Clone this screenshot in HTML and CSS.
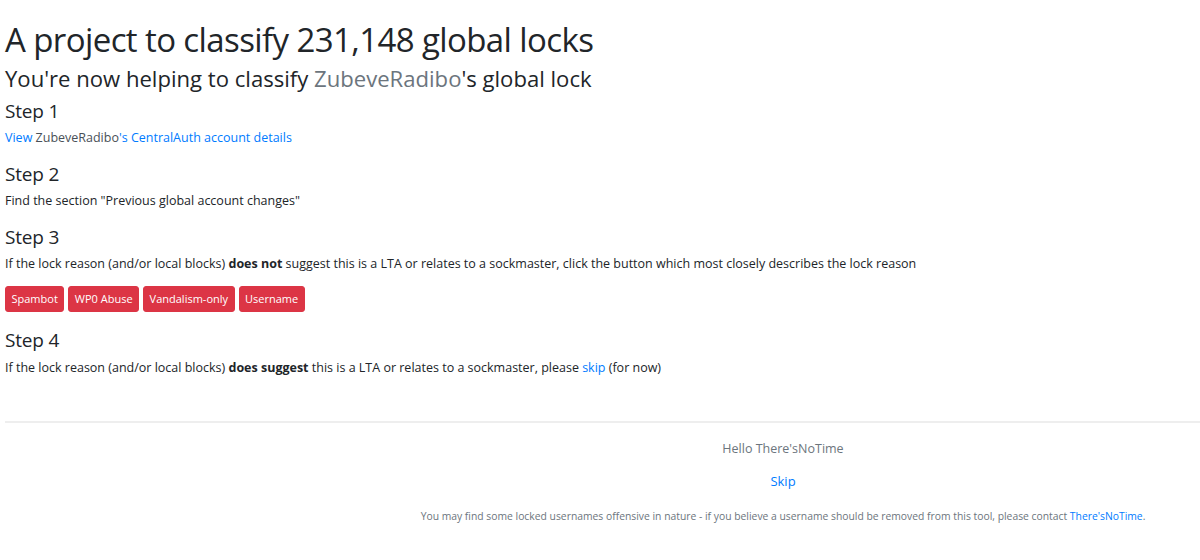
FILE: index.html
```html
<!DOCTYPE html>
<html lang="en">
<head>
<meta charset="utf-8">
<title>Global lock classifier</title>
<link rel="stylesheet" href="styles.css">
</head>
<body>
<main class="page">
  <h1 class="title">A project to classify 231,148 global locks</h1>
  <h3 class="subtitle">You're now helping to classify <span class="muted">ZubeveRadibo</span>'s global lock</h3>

  <section class="step">
    <h4 class="step-title">Step 1</h4>
    <p class="step-text"><a class="link" href="#">View <span class="uname">ZubeveRadibo</span>'s CentralAuth account details</a></p>
  </section>

  <section class="step">
    <h4 class="step-title">Step 2</h4>
    <p class="step-text">Find the section "Previous global account changes"</p>
  </section>

  <section class="step">
    <h4 class="step-title">Step 3</h4>
    <p class="step-text">If the lock reason (and/or local blocks) <b>does not</b> suggest this is a LTA or relates to a sockmaster, click the button which most closely describes the lock reason</p>
    <div class="buttons">
      <button class="btn" type="button">Spambot</button>
      <button class="btn" type="button">WP0 Abuse</button>
      <button class="btn" type="button">Vandalism-only</button>
      <button class="btn" type="button">Username</button>
    </div>
  </section>

  <section class="step">
    <h4 class="step-title">Step 4</h4>
    <p class="step-text">If the lock reason (and/or local blocks) <b>does suggest</b> this is a LTA or relates to a sockmaster, please <a class="link" href="#">skip</a> (for now)</p>
  </section>
</main>

<footer class="footer">
  <div class="footer-inner">
    <p class="hello">Hello There'sNoTime</p>
    <p class="skip"><a class="link" href="#">Skip</a></p>
    <p class="note">You may find some locked usernames offensive in nature - if you believe a username should be removed from this tool, please contact <a class="link" href="#">There'sNoTime</a>.</p>
  </div>
</footer>
</body>
</html>
```

FILE: styles.css
```css
html, body {
  margin: 0;
  padding: 0;
  background: #ffffff;
}

body {
  font-family: "Open Sans", "Noto Sans", sans-serif;
  color: #212529;
  font-size: 12.5px;
  line-height: 1.5;
}

.page {
  padding: 20px 0 0 5px;
}

.title {
  font-size: 33px;
  font-weight: 400;
  line-height: 1.2;
  margin: 0 0 5px;
  letter-spacing: -0.6px;
}

.subtitle {
  font-size: 22.1px;
  font-weight: 400;
  line-height: 1.2;
  margin: 0 0 9px;
}

.muted {
  color: #6c757d;
}

.step-title {
  font-size: 19px;
  font-weight: 400;
  line-height: 1.2;
  margin: 0 0 6.5px;
  letter-spacing: -0.2px;
}

.step-text {
  margin: 0 0 15px;
}

.step-text b {
  font-weight: 700;
}

.link {
  color: #007bff;
  text-decoration: none;
}

.uname {
  color: #495057;
}

.buttons {
  display: flex;
  gap: 4px;
  margin: -3px 0 17px;
}

.btn {
  font-family: inherit;
  font-size: 11px;
  line-height: 18px;
  padding: 3px 5.5px;
  color: #ffffff;
  background: #dc3545;
  border: 1px solid #dc3545;
  border-radius: 3px;
}

.footer {
  margin: 44px 0 0 5px;
  border-top: 2px solid #eeeeee;
}

.footer-inner {
  padding: 17px 0 0 361px;
  text-align: center;
}

.hello {
  margin: 0 0 13px;
  font-size: 12.5px;
  color: #6c757d;
}

.skip {
  margin: 0 0 17px;
  font-size: 13px;
}

.note {
  margin: 0;
  font-size: 10.35px;
  color: #6c757d;
}
```
